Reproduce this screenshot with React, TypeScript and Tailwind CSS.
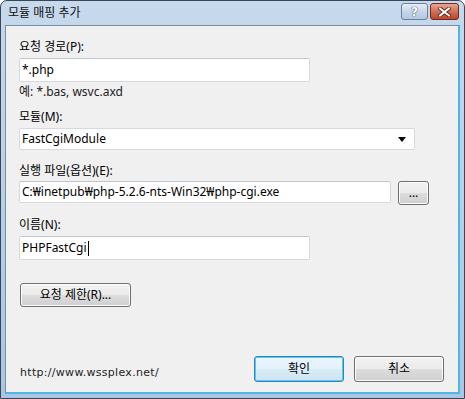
/**
 * 모듈 매핑 추가 — Windows 7 스타일 대화 상자
 */

const KR = { fontFamily: '"Noto Sans", "Noto Sans CJK KR", sans-serif' };

/** 텍스트 박스 */
function TextBox({ value, width, height = 23, caret = false }: { value: string; width: number; height?: number; caret?: boolean }) {
  return (
    <div
      className="flex items-center bg-white border border-[#d6dadf] border-t-[#c3c7cc] rounded-[2px] pl-[2px] text-[12px] text-black"
      style={{ width, height }}
    >
      <span>{value}</span>
      {caret && <span className="ml-[1px] w-px h-[15px] bg-black" />}
    </div>
  );
}

/** 버튼 (기본 버튼은 파란 테두리) */
function Button({ label, width, height = 24, isDefault = false }: { label: string; width: number; height?: number; isDefault?: boolean }) {
  return (
    <div
      className={
        isDefault
          ? 'flex items-center justify-center rounded-[3px] border border-[#3c7fb1] shadow-[inset_0_0_0_1px_#48d0f6] bg-[linear-gradient(to_bottom,#eaf6fd_0%,#e3f1fa_50%,#d9ecf8_50%,#cfe3f1_100%)] text-[12px] text-black'
          : 'flex items-center justify-center rounded-[3px] border border-[#707070] shadow-[inset_0_0_0_1px_#fbfbfb] bg-[linear-gradient(to_bottom,#f2f2f2_0%,#ebebeb_50%,#dddddd_50%,#cfcfcf_100%)] text-[12px] text-black'
      }
      style={{ width, height }}
    >
      {label}
    </div>
  );
}

export default function App() {
  return (
    <div className="w-[465px] h-[399px] bg-white" style={KR}>
      <div className="flex h-full w-full flex-col rounded-t-[7px] border border-[#3a4655] bg-gradient-to-b from-[#c6d9ed] to-[#aac6e3]">
        {/* 타이틀 바 */}
        <div className="flex h-[24px] items-center justify-between pl-[7px] pr-[5px]">
          <span className="text-[12px] text-[#111]">모듈 매핑 추가</span>
          <div className="flex items-center gap-[2px] -mt-[3px]">
            <div className="flex h-[17px] w-[27px] items-center justify-center rounded-[3px] border border-[#6c7f98] bg-gradient-to-b from-[#e6eef7] via-[#c7d6e8] to-[#b4c8e0]">
              <span className="text-[12px] font-bold leading-none text-white [text-shadow:0_0_1px_#34435a,0_0_1px_#34435a]" style={{ fontFamily: '"DejaVu Sans", sans-serif' }}>?</span>
            </div>
            <div className="flex h-[17px] w-[29px] items-center justify-center rounded-[3px] border border-[#6e2b22] bg-gradient-to-b from-[#e8a593] via-[#d26f55] to-[#c0452a]">
              <svg width={13} height={10} viewBox="0 0 13 10">
                <path d="M2 1.5 L11 8.5 M11 1.5 L2 8.5" stroke="#4b1a13" strokeWidth={3.6} strokeLinecap="square" />
                <path d="M2 1.5 L11 8.5 M11 1.5 L2 8.5" stroke="#ffffff" strokeWidth={2} strokeLinecap="square" />
              </svg>
            </div>
          </div>
        </div>

        {/* 본문 */}
        <div className="mx-[4px] mb-[4px] flex flex-1 flex-col border border-[#7b8ca0] border-r-[#4fb6e4] border-b-[#4fb6e4] border-r-2 border-b-2 bg-[#f0f0f0] pl-[13px] pr-[14px] pb-[10px]">
          <div className="mt-[13px] h-[16px] text-[12px] leading-[16px] text-black">요청 경로(P):</div>
          <div className="mt-[3px]">
            <TextBox value="*.php" width={291} height={24} />
          </div>
          <div className="mt-[2px] h-[16px] text-[12px] leading-[16px] text-[#222]">예: *.bas, wsvc.axd</div>

          <div className="mt-[9px] h-[16px] text-[12px] leading-[16px] text-black">모듈(M):</div>
          <div className="mt-[3px] flex h-[22px] w-[396px] items-center justify-between rounded-[2px] border border-[#d6dadf] bg-white pl-[2px] pr-[8px] text-[12px] text-black">
            <span>FastCgiModule</span>
            <svg width={8} height={5} viewBox="0 0 8 5">
              <path d="M0 0 H8 L4 5 Z" fill="#000" />
            </svg>
          </div>

          <div className="mt-[13px] h-[16px] text-[12px] leading-[16px] text-black">실행 파일(옵션)(E):</div>
          <div className="mt-[2px] flex items-start gap-[7px]">
            <TextBox value="C:₩inetpub₩php-5.2.6-nts-Win32₩php-cgi.exe" width={372} height={22} />
            <Button label="..." width={31} height={24} />
          </div>

          <div className="mt-[12px] h-[16px] text-[12px] leading-[16px] text-black">이름(N):</div>
          <div className="mt-[3px]">
            <TextBox value="PHPFastCgi" width={291} height={24} caret />
          </div>

          <div className="mt-[23px] pl-[1px]">
            <Button label="요청 제한(R)..." width={111} height={24} />
          </div>

          {/* 하단 */}
          <div className="mt-auto flex items-end justify-between">
            <span
              className="mb-[1px] pl-[1px] text-[11px] tracking-[0.3px] text-[#222]"
              style={{ fontFamily: '"DejaVu Sans", sans-serif' }}
            >
              http://www.wssplex.net/
            </span>
            <div className="flex gap-[10px]">
              <Button label="확인" width={90} height={26} isDefault />
              <Button label="취소" width={90} height={26} />
            </div>
          </div>
        </div>
      </div>
    </div>
  );
}
